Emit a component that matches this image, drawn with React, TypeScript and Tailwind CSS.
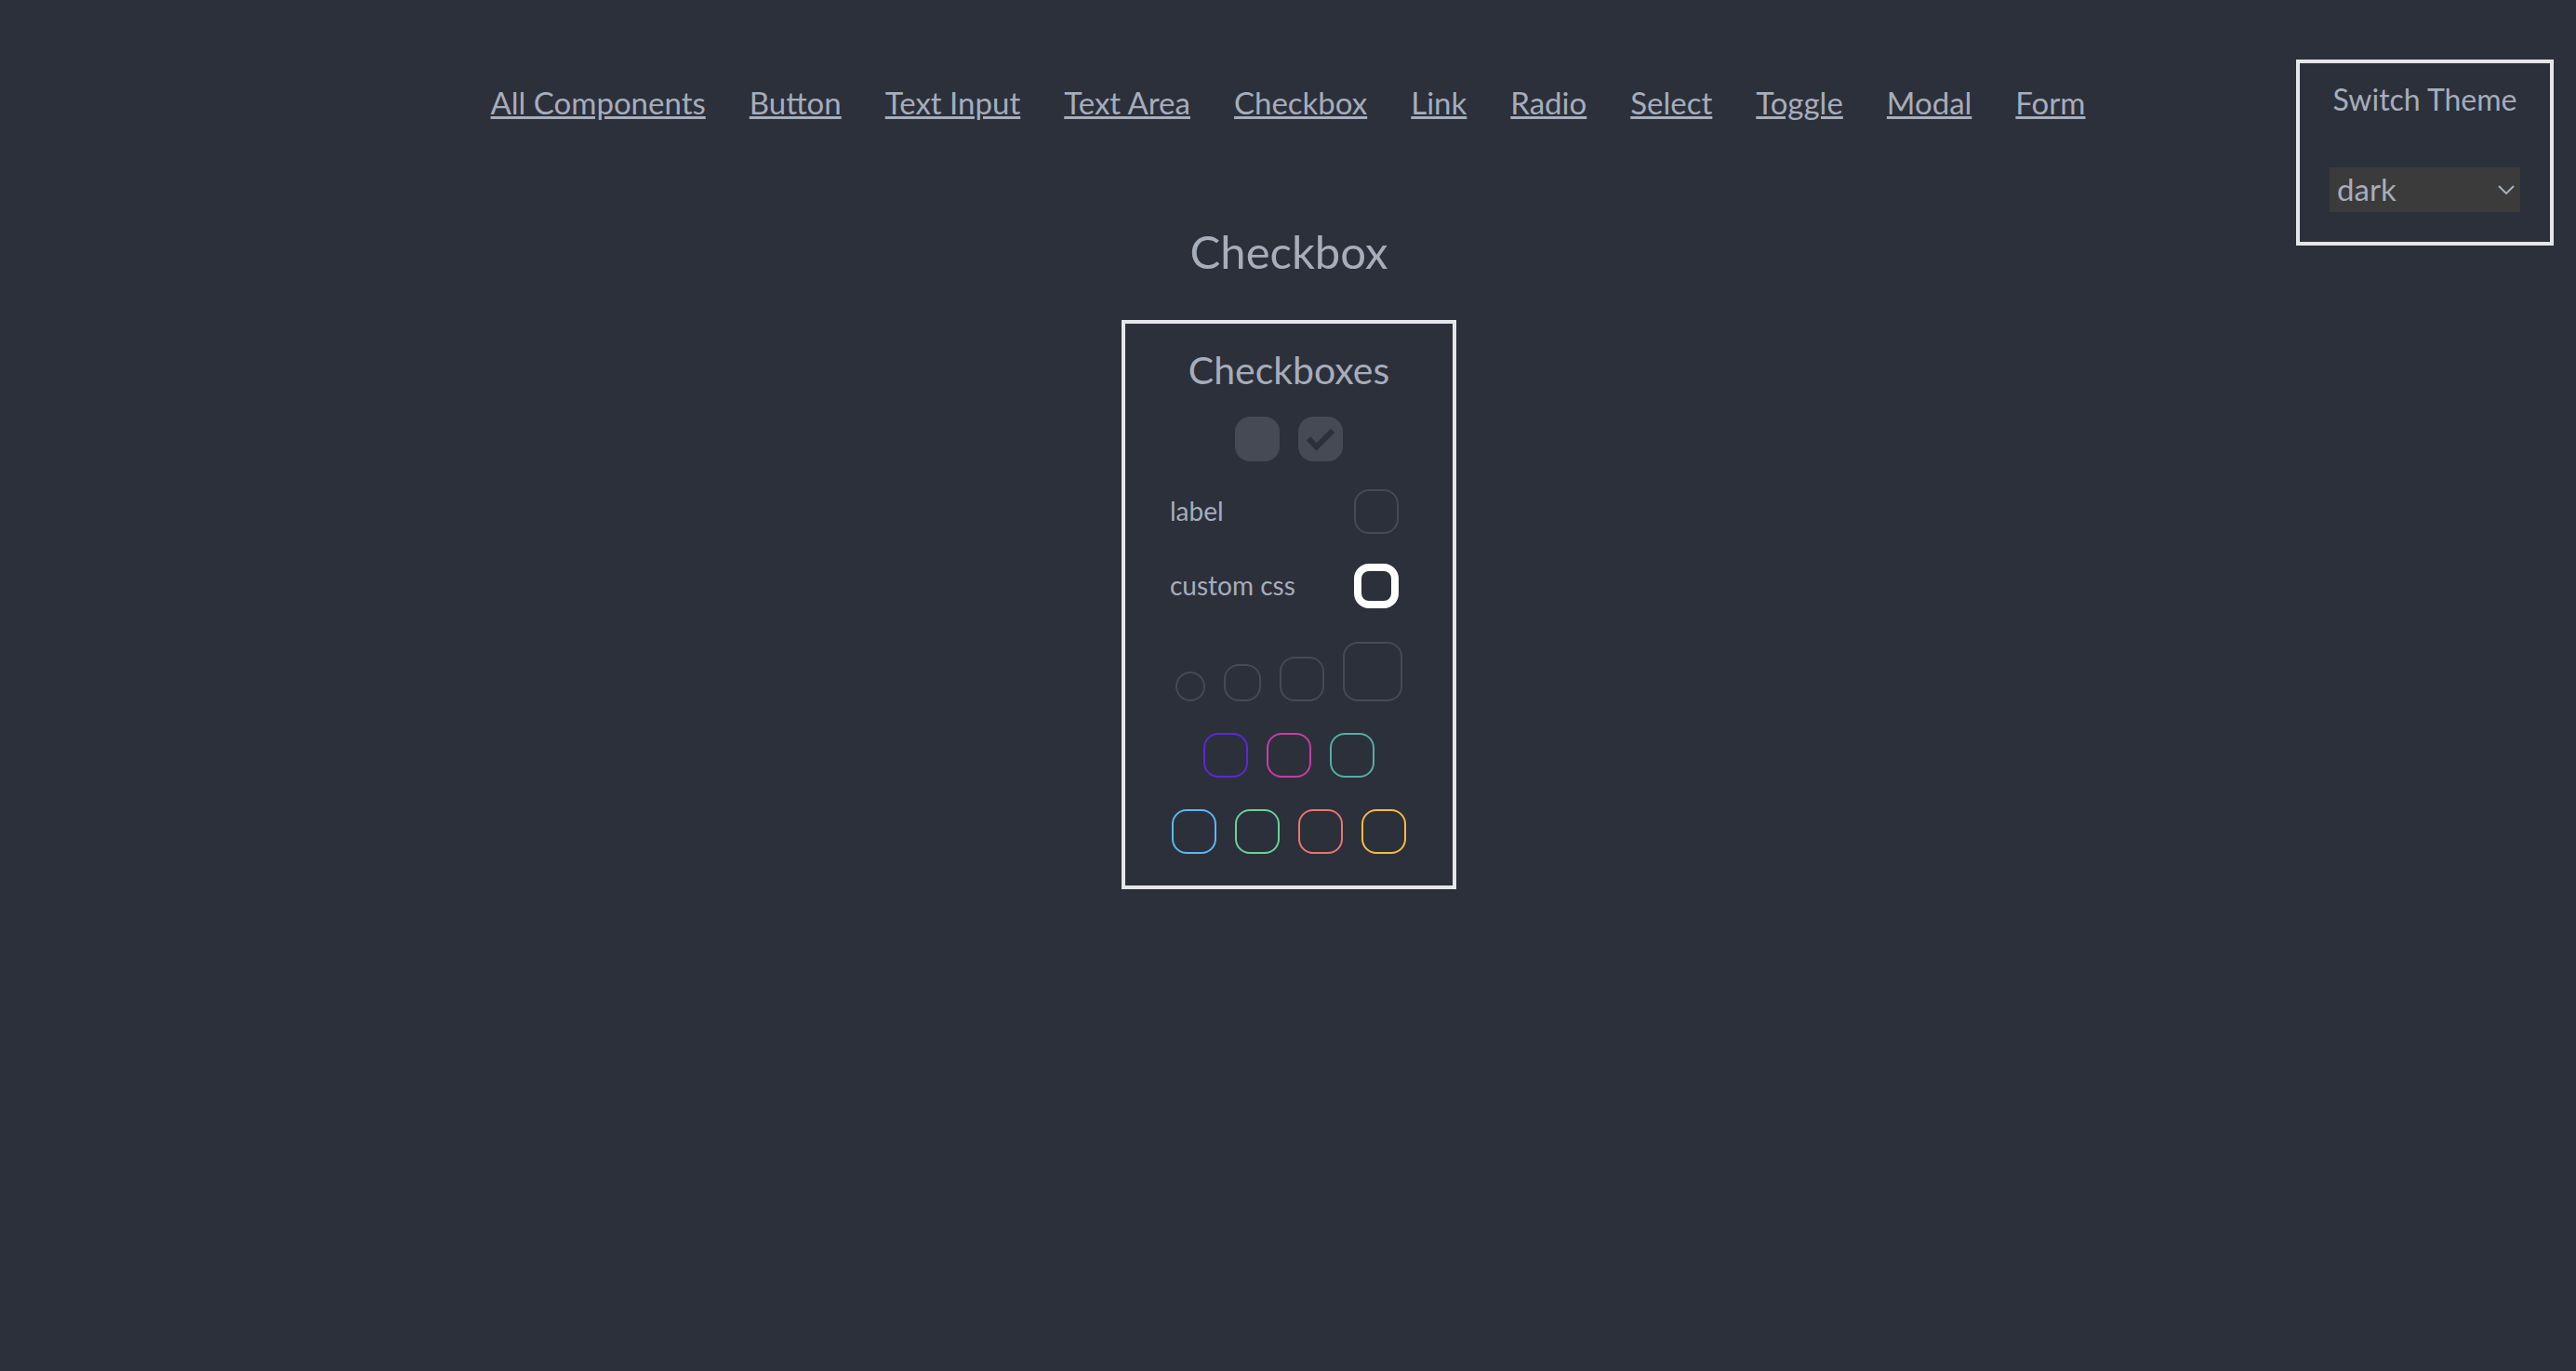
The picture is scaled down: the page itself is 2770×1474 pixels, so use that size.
import React from "react";

const links = [
  "All Components", "Button", "Text Input", "Text Area", "Checkbox", "Link",
  "Radio", "Select", "Toggle", "Modal", "Form",
];

const base = "block shrink-0 appearance-none rounded-2xl border-2 bg-transparent";

function Box({ name, look = "size-12 border-[#464a54]" }: { name: string; look?: string }) {
  return <input type="checkbox" aria-label={name} className={`${base} ${look}`} />;
}

function Labelled({ id, text, look }: { id: string; text: string; look: string }) {
  return (
    <div className="flex h-12 items-center justify-between pl-12 pr-[58px]">
      <label htmlFor={id} className="pb-0.5 text-[28px] leading-10">{text}</label>
      <input id={id} type="checkbox" className={`block size-12 shrink-0 appearance-none rounded-2xl ${look}`} />
    </div>
  );
}

export default function App() {
  return (
    <div className="min-h-screen bg-[#2c303b] pt-16 font-['Lato','Liberation_Sans',sans-serif] text-[#a6adbb]">
      <header className="grid grid-cols-[1fr_auto_1fr] items-start">
        <nav className="col-start-2 mt-6 flex gap-[47px] text-[33px] leading-[44px]">
          {links.map((l) => (
            <a key={l} href="#" className="whitespace-nowrap underline">{l}</a>
          ))}
        </nav>
        <div className="-mb-7 mr-6 flex w-[277px] flex-col justify-self-end border-4 border-[#e5e6e9] px-8 pb-8 pt-4">
          <label htmlFor="theme" className="whitespace-nowrap text-center text-[32px] leading-[46px]">Switch Theme</label>
          <div className="relative mt-[50px]">
            <select id="theme" defaultValue="dark" className="block h-12 w-full appearance-none bg-[#3b3b3b] pb-0.5 pl-2 text-[33px] leading-[46px]">
              <option>dark</option>
              <option>light</option>
            </select>
            <svg aria-hidden="true" viewBox="0 0 18 10" className="pointer-events-none absolute right-1.5 top-[19px] h-2.5 w-[18px]" fill="none" stroke="currentColor" strokeWidth="2">
              <path d="M1 1l8 8 8-8" />
            </svg>
          </div>
        </div>
      </header>
      <main className="flex flex-col items-center pl-0.5">
        <h1 className="text-[49px] leading-[68px]">Checkbox</h1>
        <section className="mt-10 w-[360px] border-4 border-[#e5e6e9] pb-[34px] pt-5">
          <h2 className="text-center text-[41px] leading-[60px]">Checkboxes</h2>
          <div className="mt-5 flex justify-center gap-5">
            <input type="checkbox" disabled aria-label="disabled" className="block size-12 appearance-none rounded-2xl bg-[#464a54]" />
            <span className="relative block size-12">
              <input type="checkbox" disabled defaultChecked aria-label="disabled checked" className="block size-12 appearance-none rounded-2xl bg-[#464a54]" />
              <svg aria-hidden="true" viewBox="0 0 48 48" className="pointer-events-none absolute inset-0 size-12" fill="none" stroke="#2c303b" strokeWidth="6">
                <path d="M11 23.5l8.5 9L37 15" />
              </svg>
            </span>
          </div>
          <div className="mt-[30px] flex flex-col gap-8">
            <Labelled id="plain" text="label" look="border-2 border-[#464a54]" />
            <Labelled id="custom" text="custom css" look="border-8 border-white" />
          </div>
          <div className="mt-9 flex items-end justify-center gap-5">
            <Box name="extra small" look="size-8 border-[#464a54]" />
            <Box name="small" look="size-10 border-[#464a54]" />
            <Box name="medium" />
            <Box name="large" look="size-16 border-[#464a54]" />
          </div>
          <div className="mt-[34px] flex justify-center gap-5">
            <Box name="primary" look="size-12 border-[#5b28d9]" />
            <Box name="secondary" look="size-12 border-[#c53da5]" />
            <Box name="accent" look="size-12 border-[#54aea5]" />
          </div>
          <div className="mt-[34px] flex justify-center gap-5">
            <Box name="info" look="size-12 border-[#5bb8f4]" />
            <Box name="success" look="size-12 border-[#6ad198]" />
            <Box name="error" look="size-12 border-[#e67673]" />
            <Box name="warning" look="size-12 border-[#f2bd41]" />
          </div>
        </section>
      </main>
    </div>
  );
}
